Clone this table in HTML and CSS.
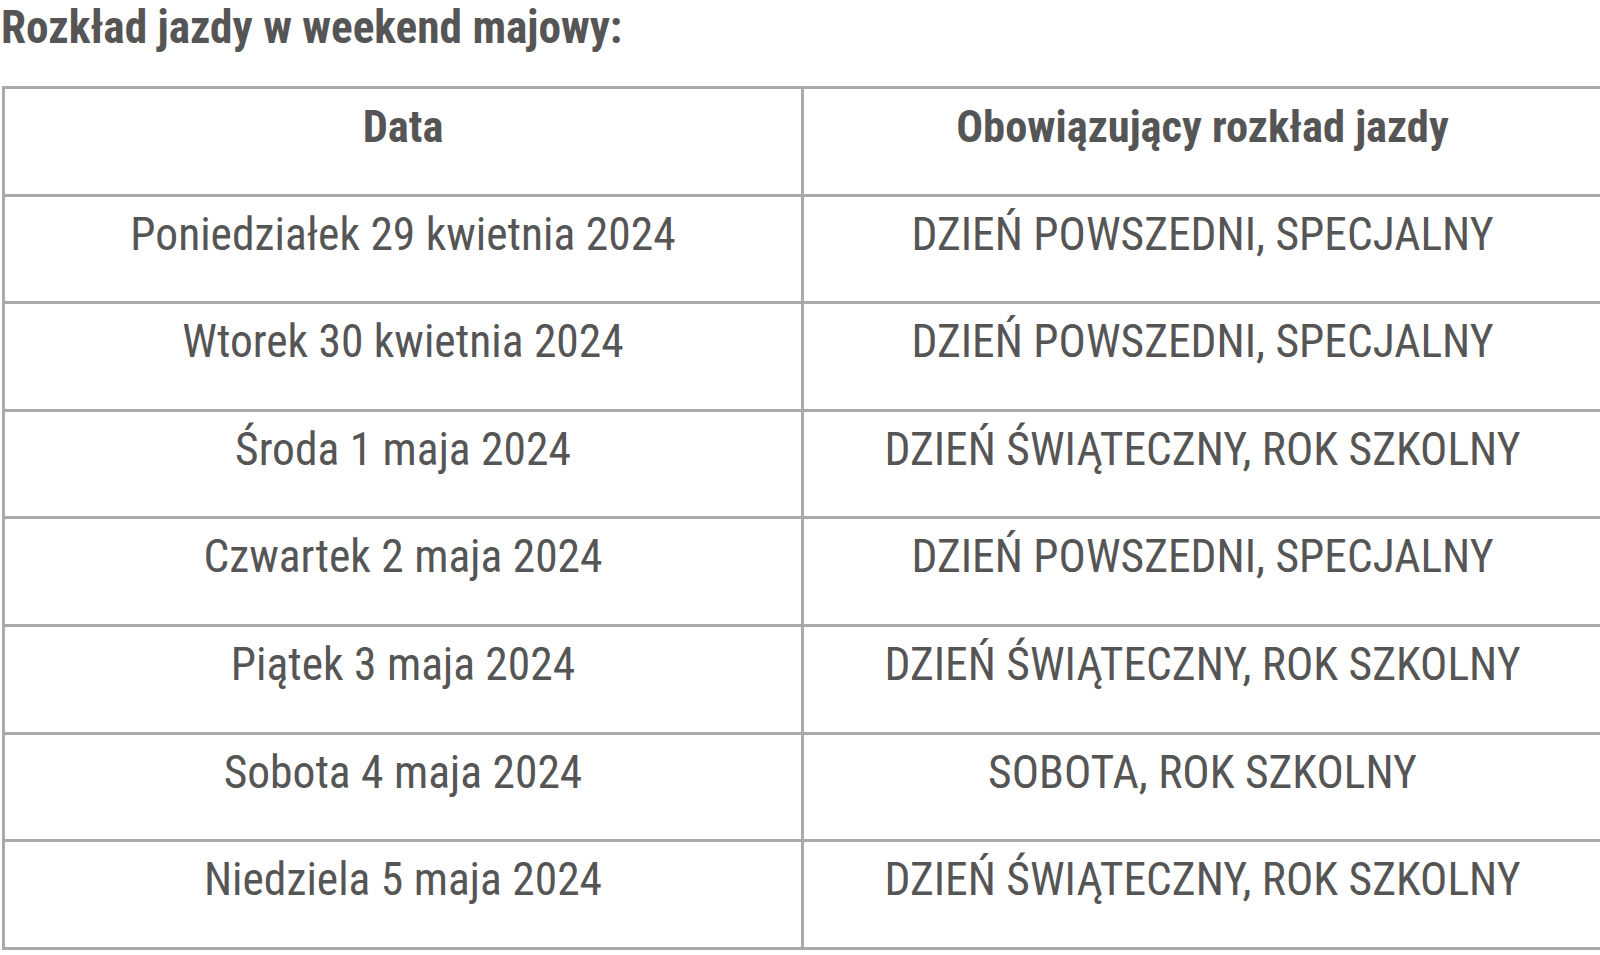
FILE: index.html
```html
<!DOCTYPE html>
<html lang="pl">
<head>
<meta charset="utf-8">
<title>Rozkład jazdy w weekend majowy</title>
<link rel="stylesheet" href="styles.css">
</head>
<body>
<h2 class="title">Rozkład jazdy w weekend majowy:</h2>
<div class="table">
  <div class="cell head">Data</div>
  <div class="cell head">Obowiązujący rozkład jazdy</div>

  <div class="cell">Poniedziałek 29 kwietnia 2024</div>
  <div class="cell">DZIEŃ POWSZEDNI, SPECJALNY</div>

  <div class="cell">Wtorek 30 kwietnia 2024</div>
  <div class="cell">DZIEŃ POWSZEDNI, SPECJALNY</div>

  <div class="cell">Środa 1 maja 2024</div>
  <div class="cell">DZIEŃ ŚWIĄTECZNY, ROK SZKOLNY</div>

  <div class="cell">Czwartek 2 maja 2024</div>
  <div class="cell">DZIEŃ POWSZEDNI, SPECJALNY</div>

  <div class="cell">Piątek 3 maja 2024</div>
  <div class="cell">DZIEŃ ŚWIĄTECZNY, ROK SZKOLNY</div>

  <div class="cell">Sobota 4 maja 2024</div>
  <div class="cell">SOBOTA, ROK SZKOLNY</div>

  <div class="cell">Niedziela 5 maja 2024</div>
  <div class="cell">DZIEŃ ŚWIĄTECZNY, ROK SZKOLNY</div>
</div>
</body>
</html>
```
FILE: styles.css
```css
html, body {
  margin: 0;
  padding: 0;
  overflow: hidden;
  background: #ffffff;
}
body {
  font-family: "Roboto Condensed", Roboto, "Liberation Sans", sans-serif;
  color: #555555;
}
.title {
  margin: 0 0 32px 0;
  padding: 2px 0 0 1px;
  font-size: 45.3px;
  line-height: 52px;
  font-weight: 700;
  color: #555555;
  white-space: nowrap;
}
.table {
  box-sizing: border-box;
  width: 1602px;
  margin-left: 2px;
  display: grid;
  grid-template-columns: 799px 1fr;
  border-top: 3px solid #aaaaaa;
  border-left: 3px solid #aaaaaa;
}
.cell {
  box-sizing: border-box;
  height: 107.6px;
  padding-top: 11px;
  border-right: 3px solid #aaaaaa;
  border-bottom: 3px solid #aaaaaa;
  font-size: 45.5px;
  line-height: 54px;
  text-align: center;
  white-space: nowrap;
}
.head {
  font-weight: 700;
  font-size: 44.5px;
}
```
